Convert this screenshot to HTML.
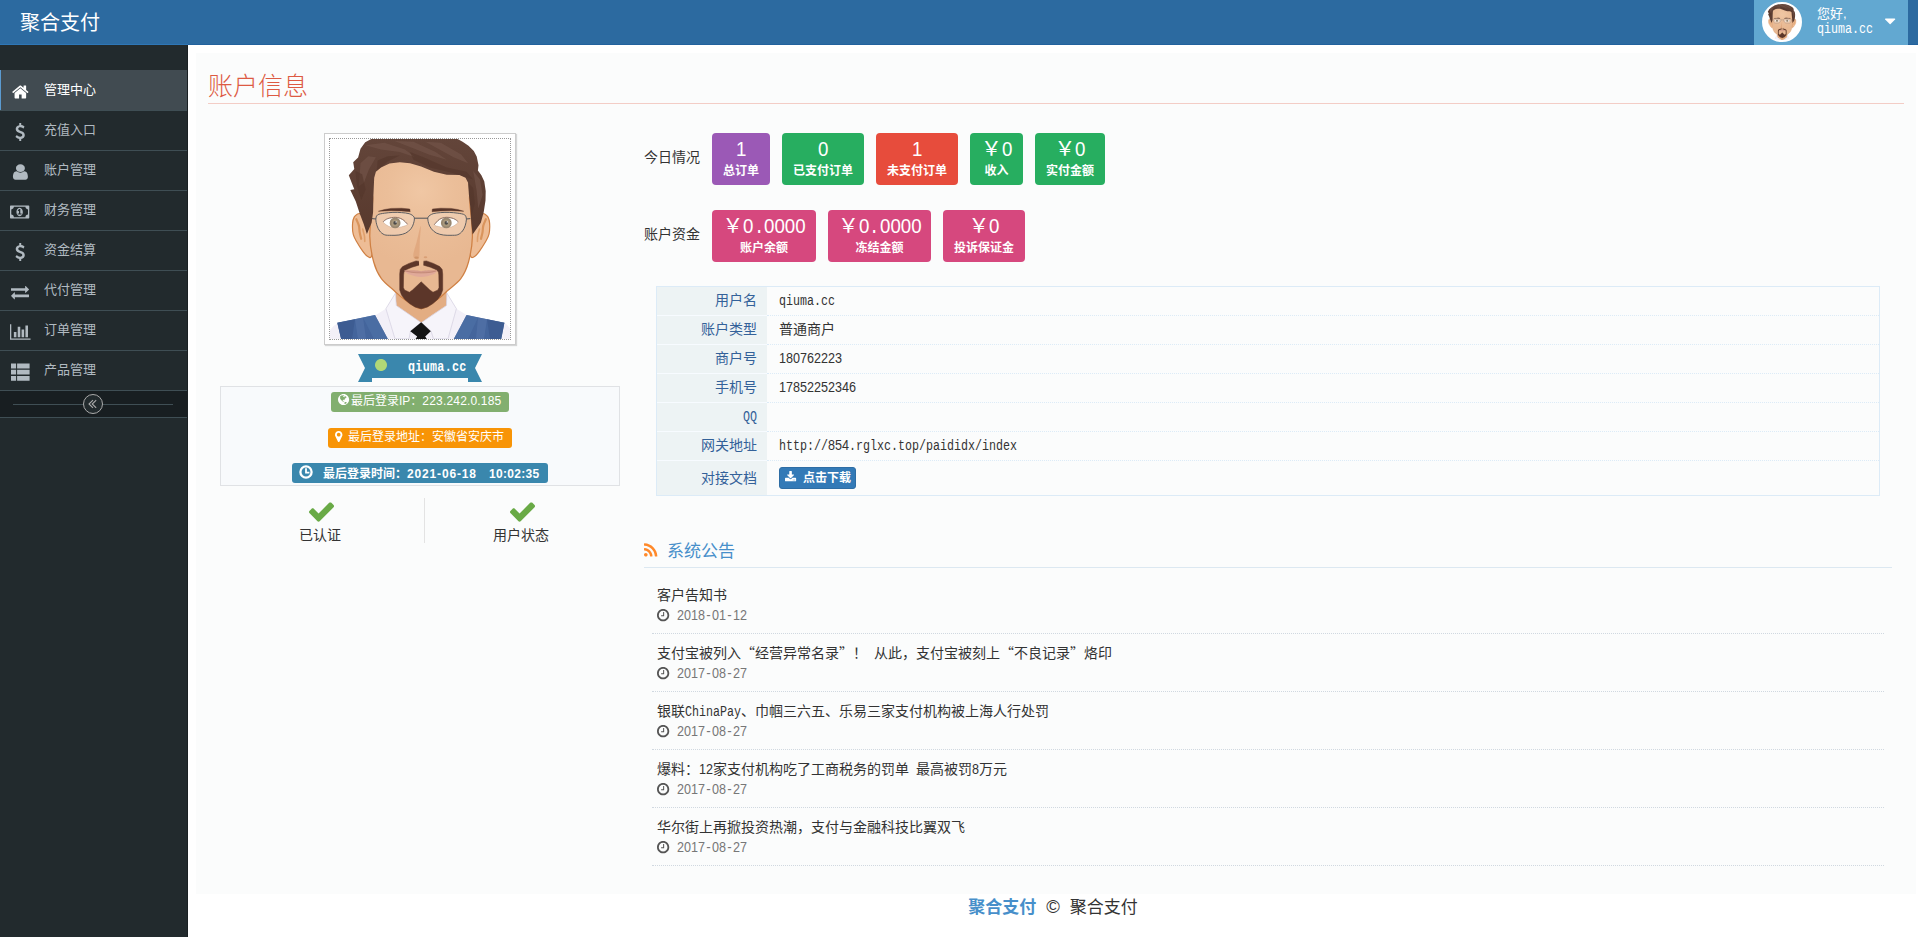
<!DOCTYPE html>
<html lang="zh-CN">
<head>
<meta charset="utf-8">
<title>聚合支付</title>
<style>
*{box-sizing:border-box}
html,body{margin:0;padding:0}
body{width:1918px;height:937px;overflow:hidden;background:#fff;position:relative;color:#333;
 font-family:"Liberation Sans","Noto Sans CJK SC",sans-serif;font-size:14px;line-height:20px}
svg.i{display:inline-block;vertical-align:top;overflow:visible}
.mm{font-family:"Liberation Mono",monospace;display:inline-block;transform:scaleX(.8333);transform-origin:0 50%;white-space:pre}
.md{font-family:"Liberation Sans",sans-serif;display:inline-block;transform:scaleX(.899);transform-origin:0 50%;white-space:pre}
.q{font-family:"Noto Sans CJK SC",sans-serif;line-height:0}
.abs{position:absolute}
/* navbar */
#navbar{position:absolute;left:0;top:0;width:1918px;height:45px;background:#2c6aa0}
#navbar:before{content:"";position:absolute;left:0;top:44px;width:188px;height:1px;background:#2e76b6}
#navbar:after{content:"";position:absolute;left:188px;top:44px;width:1730px;height:1px;background:#22629d}
#user{z-index:2}
#brand{position:absolute;left:20px;top:1px;height:45px;line-height:44px;font-size:20px;color:#fff;white-space:nowrap;text-shadow:none}
#user{position:absolute;left:1754px;top:0;width:154px;height:45px;background:#62a8d1;color:#fff}
#user .photo{position:absolute;left:8px;top:2px;width:40px;height:40px;border-radius:50%;border:2px solid #fff;background:#fff;overflow:hidden}
#user .hello{position:absolute;left:63px;top:5.5px;font-size:13px;line-height:16px;white-space:nowrap}
#user .uname{position:absolute;left:63px;top:19.5px;font-size:14px;line-height:16px;white-space:nowrap}
/* sidebar */
#sidebar{position:absolute;left:0;top:45px;width:188px;height:892px;background:#222a2d;border-right:1px solid #1a2023}
#sidebar ul{list-style:none;margin:0;padding:0;position:absolute;left:0;top:25px;width:187px}
#sidebar li{position:relative;height:40px;border-top:1px solid #3f4e54;color:#b1bac1;font-size:13px}
#sidebar li.active{background:#414b51;color:#fff;border-top-color:#414b51}
#sidebar li.active:before{content:"";position:absolute;left:0;top:-1px;width:1px;height:41px;background:#5b9bd1}
#sidebar li .t{position:absolute;left:44px;top:9px;line-height:20px;white-space:nowrap}
#sidebar li .ic{position:absolute;left:0;top:11.5px;width:40px;text-align:center;height:18px}
#toggle{position:absolute;left:0;top:345px;width:187px;height:28px;border-top:1px solid #3f4e54;border-bottom:1px solid #3f4e54;background:#181e21}
#toggle:before{content:"";position:absolute;left:13px;right:14px;top:13px;border-top:1px solid #3f4e54}
#toggle .c{position:absolute;left:83px;top:3px;width:20px;height:20px;border:1px solid #aaa;border-radius:50%;background:#222a2d}
/* main */
#page{position:absolute;left:196px;top:53px;width:1720px;height:841px;background:#fbfcfc}
h2.hd{position:absolute;left:12px;top:50px;width:1696px;height:1px;margin:0;border-bottom:1px solid #f3cdc6}
h2.hd span{position:absolute;left:0;top:-34px;font-size:25px;line-height:34px;font-weight:300;color:#dd5a43;white-space:nowrap}

/* left column (page coords: x-196, y-53) */
#pic{position:absolute;left:128px;top:80px;width:192px;height:212px;border:1px solid #ccc;background:#fff;padding:4px;box-shadow:1px 1px 1px rgba(0,0,0,.15)}
#pic .in{width:182px;height:202px;border:1px dotted #999;background:#fff;overflow:hidden}
#ribbon{position:absolute;left:162px;top:301px;width:124px;height:28px}
#ribbon .tx{position:absolute;left:50px;top:2px;font-size:14px;line-height:20px;font-weight:bold;color:#fff;white-space:nowrap;letter-spacing:.4px}
#contact{position:absolute;left:24px;top:333px;width:400px;height:100px;border:1px solid #e0e2e5;background:#f8fafc}
.lb{position:absolute;height:20px;border-radius:3px;color:#fff;font-size:12px;line-height:20px;white-space:nowrap;text-align:left}
.lb1{left:110px;top:5px;width:178px;background:#82af6f}
.lb2{left:107px;top:41px;width:184px;background:#f89406}
.lb3{left:71px;top:76px;width:256px;background:#3a87ad;font-weight:bold}
.lb .tx{position:absolute;top:0}
.g2{position:absolute;top:445px;width:200px;height:45px;text-align:center;font-size:14px}
.g2 .ck{position:absolute;left:0;width:200px;top:-5px;text-align:center}
.g2 .tx{position:absolute;left:0;width:200px;top:27px;line-height:20px;color:#333}
#vsep{position:absolute;left:228px;top:445px;width:1px;height:45px;background:#e3e3e3}
/* right column */
.rowlab{position:absolute;left:448px;font-size:14px;line-height:20px;color:#333;white-space:nowrap}
.sb{position:absolute;height:52px;border-radius:4px;color:#fff;text-align:center;white-space:nowrap}
.sb .n{position:absolute;left:0;right:0;top:4px;font-size:20.8px;line-height:24px}
.sb .l{position:absolute;left:0;right:0;top:28.7px;font-size:12px;line-height:18px;font-weight:bold}
.purple{background:#9b59b6}.green{background:#27ae60}.red{background:#e74c3c}.pink{background:#d6487e}
#info{position:absolute;left:460px;top:233px;width:1224px;border:1px solid #dcebf7;font-size:14px}
#info .r{display:flex;height:29px}
#info .r:last-child{height:35px}
#info .k{width:110px;flex:none;text-align:right;padding:4px 10px 0 4px;color:#336199;background:#edf3f4;border-top:1px solid #f7fbff;line-height:18px}
#info .v{flex:1;padding:4px 4px 0 12px;border-top:1px dotted #dcebf7;color:#333;line-height:18px;white-space:nowrap}
#info .r:first-child{height:28px}
#info .r:first-child .k,#info .r:first-child .v{border-top:0}
#dl{display:inline-block;position:relative;top:2px;height:22px;width:77px;border:1px solid #2e6da4;border-radius:3px;background:#337ab7;color:#fff;font-size:12px;font-weight:bold;line-height:20px}
#whd{position:absolute;left:448px;top:485px;width:1248px;height:30px;border-bottom:1px solid #dce8f1}
#whd .tt{position:absolute;left:23px;top:1px;font-size:17px;line-height:26px;color:#478fca;white-space:nowrap}
#feed{position:absolute;left:456px;top:523px;width:1232px}
.act{height:58px;border-bottom:1px dotted #d0d8e0;position:relative}
.act .ti{position:absolute;left:5px;top:9px;line-height:20px;font-size:14px;color:#333;white-space:nowrap}
.act .tm{position:absolute;left:5px;top:29px;line-height:20px;font-size:14px;color:#777;white-space:nowrap}
.act .tm .d{position:absolute;left:20px;top:0}
#footer{position:absolute;left:188px;top:896px;width:1730px;text-align:center;font-size:17px;line-height:24px;color:#333}
#footer b{color:#478fca}
#footer .cp{display:inline-block;width:33.6px;text-align:center;font-size:18.5px;line-height:20px}

</style>
</head>
<body>
<div id="navbar">
  <div id="brand">聚合支付</div>
  <div id="user">
    <div class="photo"><svg id="av2" viewBox="0 0 180 200" width="36" height="40" style="display:block"><defs><radialGradient id="avsk2" cx="91" cy="52" r="75" gradientUnits="userSpaceOnUse"><stop offset="0" stop-color="#f0c7a4"/><stop offset=".45" stop-color="#ebbe99"/><stop offset="1" stop-color="#e8b892"/></radialGradient><linearGradient id="avhr2" x1="0" y1="0" x2="0" y2="1"><stop offset="0" stop-color="#63453a"/><stop offset="1" stop-color="#58392d"/></linearGradient></defs><rect width="36" height="40" fill="#fff"/><path d="M-1 200 L-1 193 Q2 187 7.3 184.5 L45 176.5 L55.9 169.7 L65.5 154 L91 170 L116.8 154 L126.4 169.7 L136.6 176.1 L174.4 183.8 Q180 187 181 193 L181 200 Z" fill="#f3f0f8"/><path d="M65.5 140 L65.5 158 L66.5 166.5 L80 176 L91.2 184 L102 176 L116.5 166.5 L116.8 158 L116.8 140 Z" fill="#e3ad83"/><path d="M66 166 L91.2 184 L116.6 166 L110 178 L91.2 186 L72 178Z" fill="#edbf99"/><path d="M65.5 154 L55.9 169.7 L65 199.8 L79 199.8 L80.5 192 L91 183.5 L66.3 166.5 Z" fill="#f6f4fa" stroke="#cfc9dc" stroke-width=".6"/><path d="M116.8 154 L126.4 169.7 L118 199.8 L103.5 199.8 L101 192 L91.4 183.5 L116.5 166.5 Z" fill="#f6f4fa" stroke="#cfc9dc" stroke-width=".6"/><path d="M7.3 183.8 L45 176.1 L57.9 200 L11.1 200 Z" fill="#44659c"/><path d="M7.3 183.8 L25 180.2 L22 200 L11.1 200Z" fill="#3d5c92"/><path d="M33 178.5 L45 176.1 L57.9 200 L44 200Z" fill="#4d70a6" opacity=".7"/><path d="M25 180.2 L33 178.5 L36 200 L28 200Z" fill="#5272a8" opacity=".7"/><path d="M136.6 176.1 L174.4 183.8 L171.2 200 L123.8 200 Z" fill="#44659c"/><path d="M157 180.2 L174.4 183.8 L171.2 200 L160 200Z" fill="#3d5c92"/><path d="M136.6 176.1 L148 178.5 L138 200 L123.8 200Z" fill="#4d70a6" opacity=".7"/><path d="M148 178.5 L157 180.2 L154 200 L146 200Z" fill="#5272a8" opacity=".7"/><path d="M91.2 183.2 L100.8 192.2 L95.2 197.6 L96.8 200 L85.6 200 L87.2 197.6 L80.3 192.2 Z" fill="#141414"/><path d="M30.1 74.6 C27.6 74.5 28.2 74.6 27.2 75.2 C26.2 75.8 25.0 76.6 24.2 78.1 C23.4 79.6 22.8 81.2 22.6 84.1 C22.4 86.9 22.5 92.1 23.2 95.2 C23.9 98.3 25.1 100.0 26.7 102.8 C28.3 105.6 31.0 109.8 32.7 112.2 C34.4 114.6 35.5 116.0 37.0 116.9 C38.5 117.8 40.4 119.8 41.4 117.6 C42.4 115.4 42.9 110.9 43.0 104.0 C43.1 97.1 44.1 80.9 42.0 76.0 C39.9 71.1 32.6 74.7 30.1 74.6 Z" fill="#eebd96" stroke="#cf8044" stroke-width="1.2"/><path d="M152.1 74.6 C154.6 74.5 154.0 74.6 155.0 75.2 C156.0 75.8 157.2 76.6 158.0 78.1 C158.8 79.6 159.4 81.2 159.6 84.1 C159.8 86.9 159.7 92.1 159.0 95.2 C158.3 98.3 157.1 100.0 155.5 102.8 C153.9 105.6 151.2 109.8 149.5 112.2 C147.8 114.6 146.6 116.0 145.2 116.9 C143.8 117.8 141.8 119.8 140.8 117.6 C139.8 115.4 139.3 110.9 139.2 104.0 C139.1 97.1 138.0 80.9 140.2 76.0 C142.3 71.1 149.6 74.7 152.1 74.6 Z" fill="#eebd96" stroke="#cf8044" stroke-width="1.2"/><path d="M26.3 80.2 C26.7 81.3 28.3 84.4 28.9 86.6 C29.5 88.8 29.3 91.2 29.7 93.4 C30.1 95.6 30.9 98.7 31.2 99.8" fill="none" stroke="#d9945c" stroke-width="2.2" stroke-linecap="round"/><path d="M32.7 90.0 C33.0 91.2 34.0 94.8 34.4 96.9 C34.8 99.0 34.7 101.5 34.8 102.4" fill="none" stroke="#dfa06c" stroke-width="1.6" stroke-linecap="round"/><path d="M155.9 80.2 C155.5 81.3 153.9 84.4 153.3 86.6 C152.7 88.8 152.9 91.2 152.5 93.4 C152.1 95.6 151.2 98.7 151.0 99.8" fill="none" stroke="#d9945c" stroke-width="2.2" stroke-linecap="round"/><path d="M149.5 90.0 C149.2 91.2 148.1 94.8 147.8 96.9 C147.4 99.0 147.5 101.5 147.4 102.4" fill="none" stroke="#dfa06c" stroke-width="1.6" stroke-linecap="round"/><path d="M43.0 22.0 C58.7 15.7 120.9 15.7 137.0 22.0 C153.1 28.3 138.6 47.4 139.5 60.0 C140.4 72.6 142.6 86.9 142.4 97.4 C142.2 107.9 140.4 116.0 138.5 123.0 C136.6 130.1 134.2 135.0 130.8 139.7 C127.4 144.4 121.8 147.8 118.0 151.2 C114.2 154.6 112.5 156.9 108.0 160.0 C103.5 163.1 96.9 169.5 91.2 169.5 C85.5 169.5 78.5 163.0 74.0 160.0 C69.5 157.0 67.8 154.9 64.0 151.5 C60.2 148.1 54.8 144.4 51.4 139.7 C48.0 134.9 45.6 130.1 43.7 123.0 C41.8 116.0 40.0 107.9 39.8 97.4 C39.6 86.9 42.2 72.6 42.7 60.0 C43.2 47.4 27.3 28.3 43.0 22.0 Z" fill="url(#avsk2)" stroke="#cf8044" stroke-width="1.25"/><path d="M90.7 86.9 C90.2 86.9 88.1 97.4 86.8 102.2 C85.6 107.1 83.5 113.0 83.3 115.9 C83.0 118.8 84.2 119.0 85.1 119.5 C86.1 120.0 88.2 121.8 89.0 118.9 C89.8 116.0 89.5 107.6 89.8 102.2 C90.1 96.9 91.2 86.9 90.7 86.9 Z" fill="#dfa67c" opacity=".85"/><ellipse cx="86.5" cy="118.6" rx="2.2" ry="1.2" fill="#cf9468"/><ellipse cx="95.5" cy="118.3" rx="1.8" ry="1" fill="#d9a077"/><path d="M48.4 72.3 L54.4 70.5 L61.2 69.4 L71.5 69.2 L79.8 70.0 L80.2 72.7 L71.5 72.0 L61.2 71.7 L54.4 72.0 Z" fill="#593529" stroke="#593529" stroke-width=".4" stroke-linejoin="round"/><path d="M133.8 72.3 L127.8 70.5 L121.0 69.4 L110.7 69.2 L102.4 70.0 L102.0 72.7 L110.7 72.0 L121.0 71.7 L127.8 72.0 Z" fill="#593529" stroke="#593529" stroke-width=".4" stroke-linejoin="round"/><path d="M53.1 82.8 C53.0 81.5 55.7 80.3 57.8 79.6 C59.9 78.9 63.1 78.3 65.5 78.5 C67.9 78.6 70.3 79.3 72.3 80.5 C74.3 81.6 77.6 84.1 77.4 85.3 C77.3 86.6 73.5 87.3 71.5 87.9 C69.5 88.5 67.6 88.8 65.5 88.7 C63.4 88.6 60.7 88.3 58.7 87.3 C56.6 86.3 53.3 84.0 53.1 82.8 Z" fill="#fff" stroke="#b98a6a" stroke-width=".5"/><path d="M128.2 82.8 C128.3 81.5 125.5 80.3 123.6 79.6 C121.6 78.9 118.6 78.3 116.3 78.5 C113.9 78.6 111.5 79.2 109.5 80.5 C107.5 81.7 104.2 84.6 104.3 85.8 C104.5 87.1 108.3 87.4 110.3 87.9 C112.3 88.4 114.2 88.8 116.3 88.7 C118.4 88.6 121.1 88.3 123.1 87.3 C125.1 86.3 128.2 84.0 128.2 82.8 Z" fill="#fff" stroke="#b98a6a" stroke-width=".5"/><circle cx="65.1" cy="83.9" r="5.4" fill="#7d6749"/><circle cx="65.1" cy="83.9" r="3.5" fill="#937d59"/><circle cx="65.1" cy="83.9" r="1.8" fill="#1c1a18"/><circle cx="66.1" cy="82.9" r=".7" fill="#fff"/><circle cx="116.3" cy="83.9" r="5.4" fill="#7d6749"/><circle cx="116.3" cy="83.9" r="3.5" fill="#937d59"/><circle cx="116.3" cy="83.9" r="1.8" fill="#1c1a18"/><circle cx="117.3" cy="82.9" r=".7" fill="#fff"/><path d="M53.1 82.8 C53.9 82.2 55.7 80.3 57.8 79.6 C59.9 78.9 63.1 78.2 65.5 78.3 C67.9 78.4 70.3 79.1 72.3 80.3 C74.3 81.4 76.6 84.3 77.4 85.2" fill="none" stroke="#6b4534" stroke-width=".9"/><path d="M128.2 82.8 C127.5 82.2 125.5 80.3 123.6 79.6 C121.6 78.9 118.6 78.2 116.3 78.3 C113.9 78.4 111.5 79.1 109.5 80.3 C107.5 81.5 105.2 84.8 104.3 85.7" fill="none" stroke="#6b4534" stroke-width=".9"/><path d="M47.6 75.9 C49.0 74.9 51.8 74.6 54.4 74.2 C57.0 73.8 60.1 73.5 62.9 73.4 C65.8 73.3 68.8 73.4 71.5 73.6 C74.2 73.9 77.1 74.0 79.2 74.7 C81.3 75.5 83.4 76.6 84.1 78.2 C84.8 79.7 84.1 82.3 83.6 84.3 C83.1 86.2 82.2 88.2 80.9 89.8 C79.6 91.5 77.7 93.1 75.7 94.1 C73.7 95.1 71.3 95.6 68.9 96.0 C66.5 96.4 63.6 96.3 61.2 96.3 C58.8 96.2 56.3 96.5 54.4 95.7 C52.5 95.0 50.9 93.5 49.7 92.0 C48.5 90.5 47.8 88.8 47.1 86.9 C46.5 84.9 45.8 82.3 45.9 80.5 C45.9 78.6 46.1 77.0 47.6 75.9 Z" fill="#fff" fill-opacity=".22" stroke="#4e5259" stroke-width=".9"/><path d="M134.7 75.9 C133.2 74.9 130.4 74.6 127.8 74.2 C125.3 73.8 122.1 73.5 119.3 73.4 C116.4 73.3 113.5 73.4 110.7 73.6 C108.0 73.9 105.2 74.0 103.1 74.7 C101.0 75.5 98.9 76.6 98.1 78.2 C97.4 79.7 98.1 82.3 98.6 84.3 C99.2 86.2 100.0 88.2 101.4 89.8 C102.7 91.5 104.5 93.1 106.5 94.1 C108.5 95.1 110.9 95.6 113.3 96.0 C115.7 96.4 118.6 96.3 121.0 96.3 C123.4 96.2 125.9 96.5 127.8 95.7 C129.7 95.0 131.3 93.5 132.5 92.0 C133.7 90.5 134.4 88.8 135.1 86.9 C135.7 84.9 136.4 82.3 136.4 80.5 C136.3 78.6 136.1 77.0 134.7 75.9 Z" fill="#fff" fill-opacity=".22" stroke="#4e5259" stroke-width=".9"/><path d="M84.2 79.2 L98 79.2 M41.8 79.6 L46 80 M136.2 80 L140.4 79.6" stroke="#4e5259" stroke-width="1" fill="none"/><path d="M88.4 122.2 L86.0 121.9 L79.0 124.4 L72.6 127.6 L70.2 130.5 L69.7 135.0 L69.7 151.0 L71.5 156.0 L74.8 160.4 L79.5 164.6 L85.0 168.0 L91.2 169.8 L97.4 168.0 L102.9 164.6 L107.6 160.4 L110.9 156.0 L112.7 151.0 L112.7 135.0 L112.2 130.5 L109.8 127.6 L103.4 124.4 L96.4 121.9 L94.0 122.2 Z M88.8 126.2 L82.0 128.2 L76.0 130.8 L74.0 133.0 L73.6 136.0 L73.4 148.5 L74.5 151.0 L79.4 153.2 L82.5 151.0 L91.2 142.8 L99.9 151.0 L103.0 153.2 L107.9 151.0 L109.0 148.5 L108.8 136.0 L108.4 133.0 L106.4 130.8 L100.4 128.2 L93.6 126.2 Z" fill="#5c3629" fill-rule="evenodd" stroke="#5c3629" stroke-width=".5" stroke-linejoin="round"/><path d="M88.9 121 L93.5 121 L93.3 127.5 L89.1 127.5Z" fill="#ecbd96"/><path d="M74.5 131.7 C74.9 131.2 79.4 132.6 82.2 132.7 C85.0 132.9 88.2 132.5 91.2 132.5 C94.1 132.5 97.5 132.9 100.1 132.7 C102.7 132.6 106.3 131.2 106.8 131.7 C107.2 132.2 105.3 134.5 102.7 135.6 C100.1 136.6 95.0 138.1 91.2 138.1 C87.3 138.1 82.4 136.6 79.6 135.6 C76.9 134.5 74.1 132.2 74.5 131.7 Z" fill="#e0a999"/><path d="M74.5 131.7 C74.5 131.3 79.8 131.2 82.2 131.2 C84.5 131.2 87.1 131.5 88.6 131.7 C90.1 131.9 90.3 132.2 91.2 132.2 C92.0 132.2 92.2 131.9 93.7 131.7 C95.2 131.5 97.9 131.2 100.1 131.2 C102.3 131.2 106.8 131.3 106.8 131.7 C106.8 132.1 102.7 133.1 100.1 133.5 C97.5 133.9 94.1 134.0 91.2 134.0 C88.2 134.0 85.0 133.9 82.2 133.5 C79.4 133.1 74.5 132.1 74.5 131.7 Z" fill="#d39a8a"/><path d="M74.8 131.8 C76.0 132.1 79.5 133.0 82.2 133.4 C84.9 133.7 88.2 133.9 91.2 133.9 C94.1 133.9 97.6 133.7 100.1 133.4 C102.7 133.0 105.5 132.1 106.5 131.8" fill="none" stroke="#bd8270" stroke-width=".7"/><clipPath id="avhc2"><path d="M36.9 94.9 L33.7 84.9 L29.9 74.9 L25.8 62.6 L20.3 51.1 L24.3 50.3 L21.7 43.8 L18.8 36.2 L24.3 30.0 L23.2 23.3 L28.1 18.6 L30.5 9.8 L35.2 3.3 L41.6 -0.2 L83.9 -0.5 L127.3 -0.2 L132.6 2.7 L138.5 6.8 L143.8 12.1 L146.7 17.4 L148.5 26.2 L147.9 31.5 L151.4 36.2 L154.3 42.6 L155.7 52.0 L155.5 61.4 L153.7 73.2 L150.8 83.7 L142.6 95.5 L141.4 84.9 L140.2 67.3 L138.9 55.8 L138.1 43.8 L135.5 38.7 L129.5 36.1 L116.7 35.7 L103.9 32.7 L91.1 27.6 L80.0 24.2 L69.8 23.2 L59.5 24.6 L51.0 28.4 L45.9 32.7 L44.2 38.7 L43.4 56.7 L43.1 73.2 L41.6 83.7 Z"/></clipPath><path d="M36.9 94.9 L33.7 84.9 L29.9 74.9 L25.8 62.6 L20.3 51.1 L24.3 50.3 L21.7 43.8 L18.8 36.2 L24.3 30.0 L23.2 23.3 L28.1 18.6 L30.5 9.8 L35.2 3.3 L41.6 -0.2 L83.9 -0.5 L127.3 -0.2 L132.6 2.7 L138.5 6.8 L143.8 12.1 L146.7 17.4 L148.5 26.2 L147.9 31.5 L151.4 36.2 L154.3 42.6 L155.7 52.0 L155.5 61.4 L153.7 73.2 L150.8 83.7 L142.6 95.5 L141.4 84.9 L140.2 67.3 L138.9 55.8 L138.1 43.8 L135.5 38.7 L129.5 36.1 L116.7 35.7 L103.9 32.7 L91.1 27.6 L80.0 24.2 L69.8 23.2 L59.5 24.6 L51.0 28.4 L45.9 32.7 L44.2 38.7 L43.4 56.7 L43.1 73.2 L41.6 83.7 Z" fill="url(#avhr2)"/><g clip-path="url(#avhc2)"><path d="M35.6 6.2 L54.4 3.7 L74.9 10.5 L85.1 18.2 L69.8 13.1 L51.0 10.5 Z" fill="#76584c" opacity=".55"/><path d="M64.6 2.0 L83.4 2.8 L105.6 13.1 L116.7 20.8 L98.8 15.6 L80.0 8.0 Z" fill="#76584c" opacity=".55"/><path d="M95.4 2.8 L110.7 3.7 L131.2 15.6 L138.1 24.2 L123.6 18.2 L108.2 9.7 Z" fill="#76584c" opacity=".55"/><path d="M30.5 24.2 L38.2 17.3 L45.9 18.2 L39.0 30.2 L33.9 43.8 L28.8 47.2 Z" fill="#76584c" opacity=".55"/><path d="M143.2 31.9 L150.0 40.4 L152.6 55.8 L148.3 69.4 L146.6 51.5 Z" fill="#76584c" opacity=".55"/><path d="M80.0 13.1 L95.4 19.1 L116.7 28.4 L136.4 32.7 L143.2 40.4 L121.0 33.6 L99.6 28.4 L83.4 20.8 Z" fill="#52342a" opacity=".55"/><path d="M47.6 21.6 L57.8 17.3 L69.8 16.5 L57.8 22.5 L46.7 31.9 Z" fill="#52342a" opacity=".55"/><path d="M25.4 31.9 L32.2 35.3 L35.6 50.6 L31.3 60.9 L27.1 47.2 Z" fill="#52342a" opacity=".55"/><path d="M138.1 43.8 L143.2 48.9 L144.9 64.3 L141.5 77.1 L139.8 60.0 Z" fill="#52342a" opacity=".55"/></g></svg></div>
    <div class="hello">您好,</div>
    <div class="uname"><span class="mm" style="margin-right:-11.21px">qiuma.cc</span></div>
    <div class="abs" style="left:131px;top:12px"><svg class="i " viewBox="0 0 1024 1792" width="10.29" height="18.00" style="fill:#fff;"><path d="M1024 704C1024 669 995 640 960 640H64C29 640 0 669 0 704C0 721 7 737 19 749L467 1197C479 1209 495 1216 512 1216C529 1216 545 1209 557 1197L1005 749C1017 737 1024 721 1024 704Z"/></svg></div>
  </div>
</div>
<div id="sidebar">
  <ul>
    <li class="active"><span class="ic"><svg class="i " viewBox="0 0 1664 1792" width="16.71" height="18.00" style="fill:#fff;"><path d="M1408 992C1408 990 1408 988 1407 986L832 512L257 986C257 988 256 990 256 992V1472C256 1507 285 1536 320 1536H704V1152H960V1536H1344C1379 1536 1408 1507 1408 1472ZM1631 923C1642 910 1640 889 1627 878L1408 696V288C1408 270 1394 256 1376 256H1184C1166 256 1152 270 1152 288V483L908 279C866 244 798 244 756 279L37 878C24 889 22 910 33 923L95 997C100 1003 108 1007 116 1008C125 1009 133 1006 140 1001L832 424L1524 1001C1530 1006 1537 1008 1545 1008C1546 1008 1547 1008 1548 1008C1556 1007 1564 1003 1569 997L1631 923Z"/></svg></span><span class="t">管理中心</span></li>
    <li><span class="ic"><svg class="i " viewBox="0 0 1024 1792" width="10.29" height="18.00" style="fill:#b1bac1;"><path d="M978 1185C978 944 770 863 586 792C444 737 322 690 322 584C322 493 410 430 537 430C687 430 808 537 809 538C817 544 826 547 836 545C846 544 854 538 859 529L940 383C947 371 945 356 935 345C931 341 823 231 620 208V32C620 14 606 0 588 0H453C436 0 421 14 421 32V212C212 252 68 404 68 588C68 839 292 929 472 1000C607 1054 725 1101 725 1197C725 1310 619 1362 521 1362C344 1362 204 1228 202 1227C196 1220 187 1217 178 1218C169 1219 160 1223 155 1230L52 1365C43 1377 44 1394 54 1406C59 1412 187 1552 421 1585V1760C421 1778 436 1792 453 1792H588C606 1792 620 1778 620 1760V1585C832 1550 978 1389 978 1185Z"/></svg></span><span class="t">充值入口</span></li>
    <li><span class="ic"><svg class="i " viewBox="0 0 1280 1792" width="12.86" height="18.00" style="fill:#b1bac1;transform:scaleX(1.16)"><path d="M1280 1399C1280 1136 1215 832 953 832C872 911 762 960 640 960C518 960 408 911 327 832C65 832 0 1136 0 1399C0 1545 96 1664 213 1664H1067C1184 1664 1280 1545 1280 1399ZM1024 512C1024 300 852 128 640 128C428 128 256 300 256 512C256 724 428 896 640 896C852 896 1024 724 1024 512Z"/></svg></span><span class="t">账户管理</span></li>
    <li><span class="ic"><svg class="i " viewBox="0 0 1920 1792" width="19.29" height="18.00" style="fill:#b1bac1;"><path d="M768 1152V1056H896V768H894C878 793 863 804 839 825L762 745L910 608H1024V1056H1152V1152ZM1280 896C1280 714 1170 480 960 480C750 480 640 714 640 896C640 1078 750 1312 960 1312C1170 1312 1280 1078 1280 896ZM1792 1152C1651 1152 1536 1267 1536 1408H384C384 1267 269 1152 128 1152V640C269 640 384 525 384 384H1536C1536 525 1651 640 1792 640V1152ZM1920 320C1920 285 1891 256 1856 256H64C29 256 0 285 0 320V1472C0 1507 29 1536 64 1536H1856C1891 1536 1920 1507 1920 1472Z"/></svg></span><span class="t">财务管理</span></li>
    <li><span class="ic"><svg class="i " viewBox="0 0 1024 1792" width="10.29" height="18.00" style="fill:#b1bac1;"><path d="M978 1185C978 944 770 863 586 792C444 737 322 690 322 584C322 493 410 430 537 430C687 430 808 537 809 538C817 544 826 547 836 545C846 544 854 538 859 529L940 383C947 371 945 356 935 345C931 341 823 231 620 208V32C620 14 606 0 588 0H453C436 0 421 14 421 32V212C212 252 68 404 68 588C68 839 292 929 472 1000C607 1054 725 1101 725 1197C725 1310 619 1362 521 1362C344 1362 204 1228 202 1227C196 1220 187 1217 178 1218C169 1219 160 1223 155 1230L52 1365C43 1377 44 1394 54 1406C59 1412 187 1552 421 1585V1760C421 1778 436 1792 453 1792H588C606 1792 620 1778 620 1760V1585C832 1550 978 1389 978 1185Z"/></svg></span><span class="t">资金结算</span></li>
    <li><span class="ic"><svg class="i " viewBox="0 0 1792 1792" width="18.00" height="18.00" style="fill:#b1bac1;"><path d="M1792 1184C1792 1166 1777 1152 1760 1152H384V960C384 942 369 928 352 928C344 928 335 931 329 937L9 1257C3 1263 0 1271 0 1280C0 1288 3 1296 9 1302L328 1622C335 1628 343 1632 352 1632C370 1632 384 1617 384 1600V1408H1760C1777 1408 1792 1393 1792 1376ZM1792 640C1792 632 1789 623 1783 617L1464 298C1457 292 1449 288 1440 288C1422 288 1408 302 1408 320V512H32C15 512 0 527 0 544V736C0 753 15 768 32 768H1408V960C1408 977 1423 992 1440 992C1448 992 1457 989 1463 983L1783 663C1789 657 1792 648 1792 640Z"/></svg></span><span class="t">代付管理</span></li>
    <li><span class="ic"><svg class="i " viewBox="0 0 2048 1792" width="20.57" height="18.00" style="fill:#b1bac1;"><path d="M640 896H384V1408H640ZM1024 384H768V1408H1024ZM2048 1536H128V128H0V1664H2048ZM1408 640H1152V1408H1408ZM1792 256H1536V1408H1792Z"/></svg></span><span class="t">订单管理</span></li>
    <li><span class="ic"><svg class="i" width="18.6" height="18" viewBox="0 0 18.6 18" style="fill:#b1bac1"><path d="M0 .6h5.1v4.8H0zM6.1 .6h12.5v4.8H6.1zM0 6.8h5.1v4.8H0zM6.1 6.8h12.5v4.8H6.1zM0 13h5.1v4.8H0zM6.1 13h12.5v4.8H6.1z"/></svg></span><span class="t">产品管理</span></li>
  </ul>
  <div id="toggle"><div class="c"><span class="abs" style="left:3.5px;top:1px"><svg class="i " viewBox="0 0 1024 1792" width="8.57" height="15.00" style="fill:#aaa;"><path d="M627 1376C627 1368 623 1359 617 1353L224 960L617 567C623 561 627 552 627 544C627 536 623 527 617 521L567 471C561 465 552 461 544 461C536 461 527 465 521 471L55 937C49 943 45 952 45 960C45 968 49 977 55 983L521 1449C527 1455 536 1459 544 1459C552 1459 561 1455 567 1449L617 1399C623 1393 627 1384 627 1376ZM1011 1376C1011 1368 1007 1359 1001 1353L608 960L1001 567C1007 561 1011 552 1011 544C1011 536 1007 527 1001 521L951 471C945 465 936 461 928 461C920 461 911 465 905 471L439 937C433 943 429 952 429 960C429 968 433 977 439 983L905 1449C911 1455 920 1459 928 1459C936 1459 945 1455 951 1449L1001 1399C1007 1393 1011 1384 1011 1376Z"/></svg></span></div></div>
</div>
<div id="page">
  <h2 class="hd"><span>账户信息</span></h2>
  <div id="pic"><div class="in"><svg id="av" viewBox="0 0 180 200" width="180" height="200" style="display:block"><defs><radialGradient id="avsk" cx="91" cy="52" r="75" gradientUnits="userSpaceOnUse"><stop offset="0" stop-color="#f0c7a4"/><stop offset=".45" stop-color="#ebbe99"/><stop offset="1" stop-color="#e8b892"/></radialGradient><linearGradient id="avhr" x1="0" y1="0" x2="0" y2="1"><stop offset="0" stop-color="#63453a"/><stop offset="1" stop-color="#58392d"/></linearGradient></defs><rect width="180" height="200" fill="#fff"/><path d="M-1 200 L-1 193 Q2 187 7.3 184.5 L45 176.5 L55.9 169.7 L65.5 154 L91 170 L116.8 154 L126.4 169.7 L136.6 176.1 L174.4 183.8 Q180 187 181 193 L181 200 Z" fill="#f3f0f8"/><path d="M65.5 140 L65.5 158 L66.5 166.5 L80 176 L91.2 184 L102 176 L116.5 166.5 L116.8 158 L116.8 140 Z" fill="#e3ad83"/><path d="M66 166 L91.2 184 L116.6 166 L110 178 L91.2 186 L72 178Z" fill="#edbf99"/><path d="M65.5 154 L55.9 169.7 L65 199.8 L79 199.8 L80.5 192 L91 183.5 L66.3 166.5 Z" fill="#f6f4fa" stroke="#cfc9dc" stroke-width=".6"/><path d="M116.8 154 L126.4 169.7 L118 199.8 L103.5 199.8 L101 192 L91.4 183.5 L116.5 166.5 Z" fill="#f6f4fa" stroke="#cfc9dc" stroke-width=".6"/><path d="M7.3 183.8 L45 176.1 L57.9 200 L11.1 200 Z" fill="#44659c"/><path d="M7.3 183.8 L25 180.2 L22 200 L11.1 200Z" fill="#3d5c92"/><path d="M33 178.5 L45 176.1 L57.9 200 L44 200Z" fill="#4d70a6" opacity=".7"/><path d="M25 180.2 L33 178.5 L36 200 L28 200Z" fill="#5272a8" opacity=".7"/><path d="M136.6 176.1 L174.4 183.8 L171.2 200 L123.8 200 Z" fill="#44659c"/><path d="M157 180.2 L174.4 183.8 L171.2 200 L160 200Z" fill="#3d5c92"/><path d="M136.6 176.1 L148 178.5 L138 200 L123.8 200Z" fill="#4d70a6" opacity=".7"/><path d="M148 178.5 L157 180.2 L154 200 L146 200Z" fill="#5272a8" opacity=".7"/><path d="M91.2 183.2 L100.8 192.2 L95.2 197.6 L96.8 200 L85.6 200 L87.2 197.6 L80.3 192.2 Z" fill="#141414"/><path d="M30.1 74.6 C27.6 74.5 28.2 74.6 27.2 75.2 C26.2 75.8 25.0 76.6 24.2 78.1 C23.4 79.6 22.8 81.2 22.6 84.1 C22.4 86.9 22.5 92.1 23.2 95.2 C23.9 98.3 25.1 100.0 26.7 102.8 C28.3 105.6 31.0 109.8 32.7 112.2 C34.4 114.6 35.5 116.0 37.0 116.9 C38.5 117.8 40.4 119.8 41.4 117.6 C42.4 115.4 42.9 110.9 43.0 104.0 C43.1 97.1 44.1 80.9 42.0 76.0 C39.9 71.1 32.6 74.7 30.1 74.6 Z" fill="#eebd96" stroke="#cf8044" stroke-width="1.2"/><path d="M152.1 74.6 C154.6 74.5 154.0 74.6 155.0 75.2 C156.0 75.8 157.2 76.6 158.0 78.1 C158.8 79.6 159.4 81.2 159.6 84.1 C159.8 86.9 159.7 92.1 159.0 95.2 C158.3 98.3 157.1 100.0 155.5 102.8 C153.9 105.6 151.2 109.8 149.5 112.2 C147.8 114.6 146.6 116.0 145.2 116.9 C143.8 117.8 141.8 119.8 140.8 117.6 C139.8 115.4 139.3 110.9 139.2 104.0 C139.1 97.1 138.0 80.9 140.2 76.0 C142.3 71.1 149.6 74.7 152.1 74.6 Z" fill="#eebd96" stroke="#cf8044" stroke-width="1.2"/><path d="M26.3 80.2 C26.7 81.3 28.3 84.4 28.9 86.6 C29.5 88.8 29.3 91.2 29.7 93.4 C30.1 95.6 30.9 98.7 31.2 99.8" fill="none" stroke="#d9945c" stroke-width="2.2" stroke-linecap="round"/><path d="M32.7 90.0 C33.0 91.2 34.0 94.8 34.4 96.9 C34.8 99.0 34.7 101.5 34.8 102.4" fill="none" stroke="#dfa06c" stroke-width="1.6" stroke-linecap="round"/><path d="M155.9 80.2 C155.5 81.3 153.9 84.4 153.3 86.6 C152.7 88.8 152.9 91.2 152.5 93.4 C152.1 95.6 151.2 98.7 151.0 99.8" fill="none" stroke="#d9945c" stroke-width="2.2" stroke-linecap="round"/><path d="M149.5 90.0 C149.2 91.2 148.1 94.8 147.8 96.9 C147.4 99.0 147.5 101.5 147.4 102.4" fill="none" stroke="#dfa06c" stroke-width="1.6" stroke-linecap="round"/><path d="M43.0 22.0 C58.7 15.7 120.9 15.7 137.0 22.0 C153.1 28.3 138.6 47.4 139.5 60.0 C140.4 72.6 142.6 86.9 142.4 97.4 C142.2 107.9 140.4 116.0 138.5 123.0 C136.6 130.1 134.2 135.0 130.8 139.7 C127.4 144.4 121.8 147.8 118.0 151.2 C114.2 154.6 112.5 156.9 108.0 160.0 C103.5 163.1 96.9 169.5 91.2 169.5 C85.5 169.5 78.5 163.0 74.0 160.0 C69.5 157.0 67.8 154.9 64.0 151.5 C60.2 148.1 54.8 144.4 51.4 139.7 C48.0 134.9 45.6 130.1 43.7 123.0 C41.8 116.0 40.0 107.9 39.8 97.4 C39.6 86.9 42.2 72.6 42.7 60.0 C43.2 47.4 27.3 28.3 43.0 22.0 Z" fill="url(#avsk)" stroke="#cf8044" stroke-width="1.25"/><path d="M90.7 86.9 C90.2 86.9 88.1 97.4 86.8 102.2 C85.6 107.1 83.5 113.0 83.3 115.9 C83.0 118.8 84.2 119.0 85.1 119.5 C86.1 120.0 88.2 121.8 89.0 118.9 C89.8 116.0 89.5 107.6 89.8 102.2 C90.1 96.9 91.2 86.9 90.7 86.9 Z" fill="#dfa67c" opacity=".85"/><ellipse cx="86.5" cy="118.6" rx="2.2" ry="1.2" fill="#cf9468"/><ellipse cx="95.5" cy="118.3" rx="1.8" ry="1" fill="#d9a077"/><path d="M48.4 72.3 L54.4 70.5 L61.2 69.4 L71.5 69.2 L79.8 70.0 L80.2 72.7 L71.5 72.0 L61.2 71.7 L54.4 72.0 Z" fill="#593529" stroke="#593529" stroke-width=".4" stroke-linejoin="round"/><path d="M133.8 72.3 L127.8 70.5 L121.0 69.4 L110.7 69.2 L102.4 70.0 L102.0 72.7 L110.7 72.0 L121.0 71.7 L127.8 72.0 Z" fill="#593529" stroke="#593529" stroke-width=".4" stroke-linejoin="round"/><path d="M53.1 82.8 C53.0 81.5 55.7 80.3 57.8 79.6 C59.9 78.9 63.1 78.3 65.5 78.5 C67.9 78.6 70.3 79.3 72.3 80.5 C74.3 81.6 77.6 84.1 77.4 85.3 C77.3 86.6 73.5 87.3 71.5 87.9 C69.5 88.5 67.6 88.8 65.5 88.7 C63.4 88.6 60.7 88.3 58.7 87.3 C56.6 86.3 53.3 84.0 53.1 82.8 Z" fill="#fff" stroke="#b98a6a" stroke-width=".5"/><path d="M128.2 82.8 C128.3 81.5 125.5 80.3 123.6 79.6 C121.6 78.9 118.6 78.3 116.3 78.5 C113.9 78.6 111.5 79.2 109.5 80.5 C107.5 81.7 104.2 84.6 104.3 85.8 C104.5 87.1 108.3 87.4 110.3 87.9 C112.3 88.4 114.2 88.8 116.3 88.7 C118.4 88.6 121.1 88.3 123.1 87.3 C125.1 86.3 128.2 84.0 128.2 82.8 Z" fill="#fff" stroke="#b98a6a" stroke-width=".5"/><circle cx="65.1" cy="83.9" r="5.4" fill="#7d6749"/><circle cx="65.1" cy="83.9" r="3.5" fill="#937d59"/><circle cx="65.1" cy="83.9" r="1.8" fill="#1c1a18"/><circle cx="66.1" cy="82.9" r=".7" fill="#fff"/><circle cx="116.3" cy="83.9" r="5.4" fill="#7d6749"/><circle cx="116.3" cy="83.9" r="3.5" fill="#937d59"/><circle cx="116.3" cy="83.9" r="1.8" fill="#1c1a18"/><circle cx="117.3" cy="82.9" r=".7" fill="#fff"/><path d="M53.1 82.8 C53.9 82.2 55.7 80.3 57.8 79.6 C59.9 78.9 63.1 78.2 65.5 78.3 C67.9 78.4 70.3 79.1 72.3 80.3 C74.3 81.4 76.6 84.3 77.4 85.2" fill="none" stroke="#6b4534" stroke-width=".9"/><path d="M128.2 82.8 C127.5 82.2 125.5 80.3 123.6 79.6 C121.6 78.9 118.6 78.2 116.3 78.3 C113.9 78.4 111.5 79.1 109.5 80.3 C107.5 81.5 105.2 84.8 104.3 85.7" fill="none" stroke="#6b4534" stroke-width=".9"/><path d="M47.6 75.9 C49.0 74.9 51.8 74.6 54.4 74.2 C57.0 73.8 60.1 73.5 62.9 73.4 C65.8 73.3 68.8 73.4 71.5 73.6 C74.2 73.9 77.1 74.0 79.2 74.7 C81.3 75.5 83.4 76.6 84.1 78.2 C84.8 79.7 84.1 82.3 83.6 84.3 C83.1 86.2 82.2 88.2 80.9 89.8 C79.6 91.5 77.7 93.1 75.7 94.1 C73.7 95.1 71.3 95.6 68.9 96.0 C66.5 96.4 63.6 96.3 61.2 96.3 C58.8 96.2 56.3 96.5 54.4 95.7 C52.5 95.0 50.9 93.5 49.7 92.0 C48.5 90.5 47.8 88.8 47.1 86.9 C46.5 84.9 45.8 82.3 45.9 80.5 C45.9 78.6 46.1 77.0 47.6 75.9 Z" fill="#fff" fill-opacity=".22" stroke="#4e5259" stroke-width=".9"/><path d="M134.7 75.9 C133.2 74.9 130.4 74.6 127.8 74.2 C125.3 73.8 122.1 73.5 119.3 73.4 C116.4 73.3 113.5 73.4 110.7 73.6 C108.0 73.9 105.2 74.0 103.1 74.7 C101.0 75.5 98.9 76.6 98.1 78.2 C97.4 79.7 98.1 82.3 98.6 84.3 C99.2 86.2 100.0 88.2 101.4 89.8 C102.7 91.5 104.5 93.1 106.5 94.1 C108.5 95.1 110.9 95.6 113.3 96.0 C115.7 96.4 118.6 96.3 121.0 96.3 C123.4 96.2 125.9 96.5 127.8 95.7 C129.7 95.0 131.3 93.5 132.5 92.0 C133.7 90.5 134.4 88.8 135.1 86.9 C135.7 84.9 136.4 82.3 136.4 80.5 C136.3 78.6 136.1 77.0 134.7 75.9 Z" fill="#fff" fill-opacity=".22" stroke="#4e5259" stroke-width=".9"/><path d="M84.2 79.2 L98 79.2 M41.8 79.6 L46 80 M136.2 80 L140.4 79.6" stroke="#4e5259" stroke-width="1" fill="none"/><path d="M88.4 122.2 L86.0 121.9 L79.0 124.4 L72.6 127.6 L70.2 130.5 L69.7 135.0 L69.7 151.0 L71.5 156.0 L74.8 160.4 L79.5 164.6 L85.0 168.0 L91.2 169.8 L97.4 168.0 L102.9 164.6 L107.6 160.4 L110.9 156.0 L112.7 151.0 L112.7 135.0 L112.2 130.5 L109.8 127.6 L103.4 124.4 L96.4 121.9 L94.0 122.2 Z M88.8 126.2 L82.0 128.2 L76.0 130.8 L74.0 133.0 L73.6 136.0 L73.4 148.5 L74.5 151.0 L79.4 153.2 L82.5 151.0 L91.2 142.8 L99.9 151.0 L103.0 153.2 L107.9 151.0 L109.0 148.5 L108.8 136.0 L108.4 133.0 L106.4 130.8 L100.4 128.2 L93.6 126.2 Z" fill="#5c3629" fill-rule="evenodd" stroke="#5c3629" stroke-width=".5" stroke-linejoin="round"/><path d="M88.9 121 L93.5 121 L93.3 127.5 L89.1 127.5Z" fill="#ecbd96"/><path d="M74.5 131.7 C74.9 131.2 79.4 132.6 82.2 132.7 C85.0 132.9 88.2 132.5 91.2 132.5 C94.1 132.5 97.5 132.9 100.1 132.7 C102.7 132.6 106.3 131.2 106.8 131.7 C107.2 132.2 105.3 134.5 102.7 135.6 C100.1 136.6 95.0 138.1 91.2 138.1 C87.3 138.1 82.4 136.6 79.6 135.6 C76.9 134.5 74.1 132.2 74.5 131.7 Z" fill="#e0a999"/><path d="M74.5 131.7 C74.5 131.3 79.8 131.2 82.2 131.2 C84.5 131.2 87.1 131.5 88.6 131.7 C90.1 131.9 90.3 132.2 91.2 132.2 C92.0 132.2 92.2 131.9 93.7 131.7 C95.2 131.5 97.9 131.2 100.1 131.2 C102.3 131.2 106.8 131.3 106.8 131.7 C106.8 132.1 102.7 133.1 100.1 133.5 C97.5 133.9 94.1 134.0 91.2 134.0 C88.2 134.0 85.0 133.9 82.2 133.5 C79.4 133.1 74.5 132.1 74.5 131.7 Z" fill="#d39a8a"/><path d="M74.8 131.8 C76.0 132.1 79.5 133.0 82.2 133.4 C84.9 133.7 88.2 133.9 91.2 133.9 C94.1 133.9 97.6 133.7 100.1 133.4 C102.7 133.0 105.5 132.1 106.5 131.8" fill="none" stroke="#bd8270" stroke-width=".7"/><clipPath id="avhc"><path d="M36.9 94.9 L33.7 84.9 L29.9 74.9 L25.8 62.6 L20.3 51.1 L24.3 50.3 L21.7 43.8 L18.8 36.2 L24.3 30.0 L23.2 23.3 L28.1 18.6 L30.5 9.8 L35.2 3.3 L41.6 -0.2 L83.9 -0.5 L127.3 -0.2 L132.6 2.7 L138.5 6.8 L143.8 12.1 L146.7 17.4 L148.5 26.2 L147.9 31.5 L151.4 36.2 L154.3 42.6 L155.7 52.0 L155.5 61.4 L153.7 73.2 L150.8 83.7 L142.6 95.5 L141.4 84.9 L140.2 67.3 L138.9 55.8 L138.1 43.8 L135.5 38.7 L129.5 36.1 L116.7 35.7 L103.9 32.7 L91.1 27.6 L80.0 24.2 L69.8 23.2 L59.5 24.6 L51.0 28.4 L45.9 32.7 L44.2 38.7 L43.4 56.7 L43.1 73.2 L41.6 83.7 Z"/></clipPath><path d="M36.9 94.9 L33.7 84.9 L29.9 74.9 L25.8 62.6 L20.3 51.1 L24.3 50.3 L21.7 43.8 L18.8 36.2 L24.3 30.0 L23.2 23.3 L28.1 18.6 L30.5 9.8 L35.2 3.3 L41.6 -0.2 L83.9 -0.5 L127.3 -0.2 L132.6 2.7 L138.5 6.8 L143.8 12.1 L146.7 17.4 L148.5 26.2 L147.9 31.5 L151.4 36.2 L154.3 42.6 L155.7 52.0 L155.5 61.4 L153.7 73.2 L150.8 83.7 L142.6 95.5 L141.4 84.9 L140.2 67.3 L138.9 55.8 L138.1 43.8 L135.5 38.7 L129.5 36.1 L116.7 35.7 L103.9 32.7 L91.1 27.6 L80.0 24.2 L69.8 23.2 L59.5 24.6 L51.0 28.4 L45.9 32.7 L44.2 38.7 L43.4 56.7 L43.1 73.2 L41.6 83.7 Z" fill="url(#avhr)"/><g clip-path="url(#avhc)"><path d="M35.6 6.2 L54.4 3.7 L74.9 10.5 L85.1 18.2 L69.8 13.1 L51.0 10.5 Z" fill="#76584c" opacity=".55"/><path d="M64.6 2.0 L83.4 2.8 L105.6 13.1 L116.7 20.8 L98.8 15.6 L80.0 8.0 Z" fill="#76584c" opacity=".55"/><path d="M95.4 2.8 L110.7 3.7 L131.2 15.6 L138.1 24.2 L123.6 18.2 L108.2 9.7 Z" fill="#76584c" opacity=".55"/><path d="M30.5 24.2 L38.2 17.3 L45.9 18.2 L39.0 30.2 L33.9 43.8 L28.8 47.2 Z" fill="#76584c" opacity=".55"/><path d="M143.2 31.9 L150.0 40.4 L152.6 55.8 L148.3 69.4 L146.6 51.5 Z" fill="#76584c" opacity=".55"/><path d="M80.0 13.1 L95.4 19.1 L116.7 28.4 L136.4 32.7 L143.2 40.4 L121.0 33.6 L99.6 28.4 L83.4 20.8 Z" fill="#52342a" opacity=".55"/><path d="M47.6 21.6 L57.8 17.3 L69.8 16.5 L57.8 22.5 L46.7 31.9 Z" fill="#52342a" opacity=".55"/><path d="M25.4 31.9 L32.2 35.3 L35.6 50.6 L31.3 60.9 L27.1 47.2 Z" fill="#52342a" opacity=".55"/><path d="M138.1 43.8 L143.2 48.9 L144.9 64.3 L141.5 77.1 L139.8 60.0 Z" fill="#52342a" opacity=".55"/></g></svg></div></div>
  <div id="ribbon">
    <svg class="abs" style="left:0;top:0" width="124" height="28" viewBox="0 0 124 28"><polygon points="0,0 124,0 117,14 124,28 110,28 110,24 14,24 14,28 0,28 7,14" fill="#3a87ad"/></svg>
    <span class="abs" style="left:17px;top:4px"><svg class="i " viewBox="0 0 1536 1792" width="12.00" height="14.00" style="fill:#b0d877;"><path d="M1536 896C1536 472 1192 128 768 128C344 128 0 472 0 896C0 1320 344 1664 768 1664C1192 1664 1536 1320 1536 896Z"/></svg></span>
    <span class="tx"><span class="mm" style="margin-right:-11.21px">qiuma.cc</span></span>
  </div>
  <div id="contact">
    <div class="lb lb1"><span class="abs" style="left:7px;top:1px"><svg class="i " viewBox="0 0 1536 1792" width="11.14" height="13.00" style="fill:#fff;"><path d="M768 128C344 128 0 472 0 896C0 1320 344 1664 768 1664C1192 1664 1536 1320 1536 896C1536 472 1192 128 768 128ZM1042 649C1053 642 1071 633 1085 637C1096 640 1105 644 1092 653C1086 657 1077 653 1070 655C1079 657 1092 661 1088 670C1114 685 1080 703 1063 701C1071 702 1046 717 1046 716C1037 721 1025 721 1018 730C1010 741 1021 760 1006 756C1000 769 977 762 967 776C978 788 956 805 945 790C935 794 940 805 930 811C934 817 935 823 928 827C930 826 942 836 945 837C943 842 939 846 934 846C939 859 928 873 919 881C909 889 886 897 883 899C865 916 853 941 885 948C886 948 886 981 887 982C889 994 894 1029 873 1016C863 1011 857 983 854 972C851 960 850 960 842 948C829 963 827 952 816 945C805 939 789 941 783 935C768 946 757 943 754 926C750 934 758 946 757 949C752 959 743 957 735 951C722 941 694 958 679 951C680 951 684 955 687 957C684 969 677 962 671 966C664 971 658 981 652 986C665 1011 651 1035 652 1062C652 1082 665 1117 684 1128C693 1133 723 1135 732 1131C746 1125 744 1114 749 1102C754 1089 760 1083 775 1082C818 1080 785 1115 780 1133C777 1146 776 1161 774 1173C779 1175 784 1174 789 1174C789 1170 792 1165 792 1162C798 1172 818 1175 824 1163C831 1175 845 1184 847 1198C849 1212 862 1227 843 1227C829 1227 845 1255 847 1260C858 1280 876 1288 896 1278C896 1286 893 1308 882 1310C872 1312 853 1291 857 1280C856 1284 853 1287 850 1289C840 1277 823 1271 814 1259C812 1256 785 1215 791 1213C777 1219 749 1209 736 1202C715 1191 712 1162 686 1166C668 1169 663 1176 642 1168C628 1163 616 1153 602 1146C586 1137 558 1128 552 1108C546 1092 548 1073 539 1058C533 1048 515 1028 502 1028C514 1028 491 998 488 995C477 982 437 947 445 927C447 924 425 916 421 915C425 925 426 936 431 945C436 955 442 964 448 974C459 992 474 1014 472 1036C459 1040 463 1021 459 1013C452 1000 433 1000 428 986C430 985 431 985 433 984C434 967 409 953 413 941C399 930 399 909 389 895C380 882 365 876 352 867C347 864 311 818 324 815C304 820 294 773 297 761C297 761 295 761 295 760C299 748 292 686 308 685C297 686 294 659 297 654C299 650 314 665 315 667C321 664 327 656 325 649C322 641 311 634 304 628C301 626 261 600 260 601C264 594 263 587 257 582C238 597 248 568 238 565C234 564 230 561 226 557C284 465 365 388 461 335C467 334 475 334 483 334C501 336 511 351 524 360C526 355 522 347 519 342C522 334 534 332 541 330C550 329 563 327 571 331C565 322 558 314 551 306C550 307 547 309 546 311C535 302 514 314 504 318C496 322 489 327 481 330C476 332 473 332 469 331C499 315 530 301 563 290C569 294 575 301 584 308C578 303 578 326 580 330C591 345 615 335 630 335C629 335 674 341 665 330C672 340 672 355 681 364C690 355 677 345 683 336C685 332 703 327 709 324C716 319 704 312 701 310C691 304 652 301 671 278C678 270 703 274 711 279C722 285 734 296 719 306C726 307 759 316 754 329C757 323 762 314 770 314C779 315 781 336 785 341C799 366 823 316 827 318C809 311 843 302 852 305C859 308 870 332 857 331C868 341 869 363 849 362C835 361 819 342 806 357C797 367 793 382 784 391C770 405 751 404 734 402C741 403 719 426 717 430C711 437 707 445 705 453C703 463 705 474 700 484C717 479 726 510 719 511C740 508 757 508 777 515C791 520 812 526 818 541C822 535 841 538 847 540C859 546 860 559 863 570C867 585 880 610 897 602C900 600 922 590 914 584C906 577 897 559 905 549C913 538 932 535 937 521C945 498 913 501 913 484C913 474 926 471 925 459C925 449 910 429 922 422C932 416 980 426 989 432C998 438 1026 446 1028 455C1026 455 1025 455 1023 455C1031 462 1038 477 1024 481C1033 479 1059 489 1041 495C1047 492 1052 494 1058 490C1065 486 1069 479 1078 484C1080 485 1091 463 1097 464C1106 465 1108 478 1112 484C1116 493 1127 496 1131 505C1138 522 1135 538 1158 544C1165 546 1184 535 1183 550C1187 546 1189 543 1189 542C1190 556 1196 572 1213 570C1213 570 1213 589 1211 592C1205 601 1190 599 1181 604C1178 605 1154 626 1157 629C1144 614 1123 614 1106 618C1088 621 1071 623 1054 630C1046 634 1038 638 1032 645C1029 649 1024 667 1019 668C1029 666 1034 655 1042 649ZM879 1526C878 1521 877 1511 877 1510C876 1494 893 1483 892 1468C881 1465 878 1454 880 1442C882 1425 897 1413 909 1402C921 1391 924 1368 921 1354C916 1330 916 1305 912 1281C913 1287 930 1285 933 1293C937 1286 939 1277 944 1270C948 1264 955 1262 961 1257C971 1251 992 1228 1004 1242C1014 1254 989 1267 1002 1278C1006 1270 1002 1258 1010 1250C1026 1232 1037 1252 1053 1257C1070 1262 1076 1268 1089 1279C1085 1275 1105 1268 1107 1267C1126 1263 1134 1274 1147 1284C1161 1294 1183 1301 1181 1321C1191 1323 1197 1326 1205 1329C1213 1333 1224 1331 1230 1337C1138 1434 1016 1502 879 1526Z"/></svg></span><span class="tx" style="left:20px;top:-1.5px">最后登录IP：<span style="letter-spacing:.18px">223.242.0.185</span></span></div>
    <div class="lb lb2"><span class="abs" style="left:7px;top:2px"><svg class="i " viewBox="0 0 1024 1792" width="7.43" height="13.00" style="fill:#fff;"><path d="M768 640C768 781 653 896 512 896C371 896 256 781 256 640C256 499 371 384 512 384C653 384 768 499 768 640ZM1024 640C1024 357 795 128 512 128C229 128 0 357 0 640C0 701 7 764 33 819L398 1593C418 1637 464 1664 512 1664C560 1664 606 1637 627 1593L991 819C1017 764 1024 701 1024 640Z"/></svg></span><span class="tx" style="left:20px;top:-.6px">最后登录地址：安徽省安庆市</span></div>
    <div class="lb lb3"><svg class="abs" style="left:6.5px;top:2px" width="14" height="14" viewBox="0 0 14 14"><circle cx="7" cy="7" r="5.6" fill="none" stroke="#fff" stroke-width="2.3"/><path d="M7 3.2V7.6H10.4" fill="none" stroke="#fff" stroke-width="1.8"/></svg><span class="tx" style="left:31px;top:1.4px">最后登录时间：<span style="letter-spacing:.85px">2021-06-18</span><span style="display:inline-block;width:12px"></span><span style="letter-spacing:.33px">10:02:35</span></span></div>
  </div>
  <div class="g2" style="left:24px"><span class="ck" style="top:-1.5px;left:1px"><svg class="i " viewBox="0 0 1792 1792" width="29.00" height="29.00" style="fill:#69aa46;"><path d="M1671 566C1671 541 1661 516 1643 498L1507 362C1489 344 1464 334 1439 334C1414 334 1389 344 1371 362L715 1019L421 724C403 706 378 696 353 696C328 696 303 706 285 724L149 860C131 878 121 903 121 928C121 953 131 978 149 996L511 1358L647 1494C665 1512 690 1522 715 1522C740 1522 765 1512 783 1494L919 1358L1643 634C1661 616 1671 591 1671 566Z"/></svg></span><span class="tx">已认证</span></div>
  <div id="vsep"></div>
  <div class="g2" style="left:225px"><span class="ck" style="top:-1.5px;left:1px"><svg class="i " viewBox="0 0 1792 1792" width="29.00" height="29.00" style="fill:#69aa46;"><path d="M1671 566C1671 541 1661 516 1643 498L1507 362C1489 344 1464 334 1439 334C1414 334 1389 344 1371 362L715 1019L421 724C403 706 378 696 353 696C328 696 303 706 285 724L149 860C131 878 121 903 121 928C121 953 131 978 149 996L511 1358L647 1494C665 1512 690 1522 715 1522C740 1522 765 1512 783 1494L919 1358L1643 634C1661 616 1671 591 1671 566Z"/></svg></span><span class="tx">用户状态</span></div>

  <div class="rowlab" style="top:94px">今日情况</div>
  <div class="sb purple" style="left:516px;top:80px;width:58px"><div class="n"><span class="md" style="margin-right:-1.17px">1</span></div><div class="l">总订单</div></div>
  <div class="sb green" style="left:586px;top:80px;width:82px"><div class="n"><span class="md" style="margin-right:-1.17px">0</span></div><div class="l">已支付订单</div></div>
  <div class="sb red" style="left:680px;top:80px;width:82px"><div class="n"><span class="md" style="margin-right:-1.17px">1</span></div><div class="l">未支付订单</div></div>
  <div class="sb green" style="left:774px;top:80px;width:53px"><div class="n">￥<span class="md" style="margin-right:-1.17px">0</span></div><div class="l">收入</div></div>
  <div class="sb green" style="left:839px;top:80px;width:70px"><div class="n">￥<span class="md" style="margin-right:-1.17px">0</span></div><div class="l">实付金额</div></div>
  <div class="rowlab" style="top:171px">账户资金</div>
  <div class="sb pink" style="left:516px;top:157px;width:104px"><div class="n">￥<span class="md" style="margin-right:-1.17px">0</span><span class="mm" style="margin-right:-2.08px">.</span><span class="md" style="margin-right:-4.67px">0000</span></div><div class="l">账户余额</div></div>
  <div class="sb pink" style="left:632px;top:157px;width:103px"><div class="n">￥<span class="md" style="margin-right:-1.17px">0</span><span class="mm" style="margin-right:-2.08px">.</span><span class="md" style="margin-right:-4.67px">0000</span></div><div class="l">冻结金额</div></div>
  <div class="sb pink" style="left:747px;top:157px;width:82px"><div class="n">￥<span class="md" style="margin-right:-1.17px">0</span></div><div class="l">投诉保证金</div></div>

  <div id="info">
    <div class="r"><div class="k">用户名</div><div class="v"><span class="mm" style="margin-right:-11.21px">qiuma.cc</span></div></div>
    <div class="r"><div class="k">账户类型</div><div class="v">普通商户</div></div>
    <div class="r"><div class="k">商户号</div><div class="v"><span class="md" style="margin-right:-7.07px">180762223</span></div></div>
    <div class="r"><div class="k">手机号</div><div class="v"><span class="md" style="margin-right:-8.65px">17852252346</span></div></div>
    <div class="r"><div class="k"><span class="mm" style="margin-right:-2.80px">QQ</span></div><div class="v"></div></div>
    <div class="r"><div class="k">网关地址</div><div class="v"><span class="mm" style="margin-right:-5.61px">http</span><span class="mm" style="margin-right:-4.20px">://</span><span class="md" style="margin-right:-2.36px">854</span><span class="mm" style="margin-right:-33.63px">.rglxc.top/paididx/index</span></div></div>
    <div class="r"><div class="k" style="padding-top:8px">对接文档</div><div class="v"><span id="dl"><span class="abs" style="left:5px;top:3px"><svg class="i " viewBox="0 0 1664 1792" width="11.14" height="12.00" style="fill:#fff;"><path d="M1280 1344C1280 1379 1251 1408 1216 1408C1181 1408 1152 1379 1152 1344C1152 1309 1181 1280 1216 1280C1251 1280 1280 1309 1280 1344ZM1536 1344C1536 1379 1507 1408 1472 1408C1437 1408 1408 1379 1408 1344C1408 1309 1437 1280 1472 1280C1507 1280 1536 1309 1536 1344ZM1664 1120C1664 1067 1621 1024 1568 1024H1104L968 1160C931 1196 883 1216 832 1216C781 1216 733 1196 696 1160L561 1024H96C43 1024 0 1067 0 1120V1440C0 1493 43 1536 96 1536H1568C1621 1536 1664 1493 1664 1440ZM1339 551C1329 528 1306 512 1280 512H1024V64C1024 29 995 0 960 0H704C669 0 640 29 640 64V512H384C358 512 335 528 325 551C315 575 320 603 339 621L787 1069C799 1082 816 1088 832 1088C848 1088 865 1082 877 1069L1325 621C1344 603 1349 575 1339 551Z"/></svg></span><span class="abs" style="left:23px;top:0">点击下载</span></span></div></div>
  </div>

  <div id="whd"><span class="abs" style="left:0;top:4px"><svg class="i " viewBox="0 0 1408 1792" width="13.36" height="17.00" style="fill:#ff892a;"><path d="M384 1344C384 1238 298 1152 192 1152C86 1152 0 1238 0 1344C0 1450 86 1536 192 1536C298 1536 384 1450 384 1344ZM896 1467C879 1254 786 1053 634 902C483 750 282 657 69 640C67 640 66 640 64 640C48 640 32 646 21 657C7 669 0 686 0 704V839C0 872 25 899 58 902C363 931 605 1173 634 1478C637 1511 664 1536 697 1536H832C850 1536 867 1529 879 1515C891 1502 897 1485 896 1467ZM1408 1469C1390 1119 1243 790 994 542C746 293 417 146 67 128C66 128 65 128 64 128C48 128 32 134 20 146C7 158 0 174 0 192V335C0 368 26 396 60 398C641 432 1104 895 1137 1476C1139 1510 1167 1536 1201 1536H1344C1362 1536 1378 1529 1390 1516C1403 1503 1409 1486 1408 1469Z"/></svg></span><span class="tt">系统公告</span></div>
  <div id="feed">
    <div class="act"><div class="ti">客户告知书</div><div class="tm"><span class="abs" style="left:0;top:3px"><svg class="i " viewBox="0 0 1536 1792" width="12.26" height="14.30" style="fill:#555;"><path d="M896 544C896 526 882 512 864 512H800C782 512 768 526 768 544V896H544C526 896 512 910 512 928V992C512 1010 526 1024 544 1024H864C882 1024 896 1010 896 992ZM1312 896C1312 1196 1068 1440 768 1440C468 1440 224 1196 224 896C224 596 468 352 768 352C1068 352 1312 596 1312 896ZM1536 896C1536 472 1192 128 768 128C344 128 0 472 0 896C0 1320 344 1664 768 1664C1192 1664 1536 1320 1536 896Z"/></svg></span><span class="d"><span class="md" style="margin-right:-3.14px">2018</span><span class="mm" style="margin-right:-1.40px">-</span><span class="md" style="margin-right:-1.57px">01</span><span class="mm" style="margin-right:-1.40px">-</span><span class="md" style="margin-right:-1.57px">12</span></span></div></div>
    <div class="act"><div class="ti">支付宝被列入<span class="q">“</span>经营异常名录<span class="q">”</span>！&ensp;从此，支付宝被刻上<span class="q">“</span>不良记录<span class="q">”</span>烙印</div><div class="tm"><span class="abs" style="left:0;top:3px"><svg class="i " viewBox="0 0 1536 1792" width="12.26" height="14.30" style="fill:#555;"><path d="M896 544C896 526 882 512 864 512H800C782 512 768 526 768 544V896H544C526 896 512 910 512 928V992C512 1010 526 1024 544 1024H864C882 1024 896 1010 896 992ZM1312 896C1312 1196 1068 1440 768 1440C468 1440 224 1196 224 896C224 596 468 352 768 352C1068 352 1312 596 1312 896ZM1536 896C1536 472 1192 128 768 128C344 128 0 472 0 896C0 1320 344 1664 768 1664C1192 1664 1536 1320 1536 896Z"/></svg></span><span class="d"><span class="md" style="margin-right:-3.14px">2017</span><span class="mm" style="margin-right:-1.40px">-</span><span class="md" style="margin-right:-1.57px">08</span><span class="mm" style="margin-right:-1.40px">-</span><span class="md" style="margin-right:-1.57px">27</span></span></div></div>
    <div class="act"><div class="ti">银联<span class="mm" style="margin-right:-11.21px">ChinaPay</span>、巾帼三六五、乐易三家支付机构被上海人行处罚</div><div class="tm"><span class="abs" style="left:0;top:3px"><svg class="i " viewBox="0 0 1536 1792" width="12.26" height="14.30" style="fill:#555;"><path d="M896 544C896 526 882 512 864 512H800C782 512 768 526 768 544V896H544C526 896 512 910 512 928V992C512 1010 526 1024 544 1024H864C882 1024 896 1010 896 992ZM1312 896C1312 1196 1068 1440 768 1440C468 1440 224 1196 224 896C224 596 468 352 768 352C1068 352 1312 596 1312 896ZM1536 896C1536 472 1192 128 768 128C344 128 0 472 0 896C0 1320 344 1664 768 1664C1192 1664 1536 1320 1536 896Z"/></svg></span><span class="d"><span class="md" style="margin-right:-3.14px">2017</span><span class="mm" style="margin-right:-1.40px">-</span><span class="md" style="margin-right:-1.57px">08</span><span class="mm" style="margin-right:-1.40px">-</span><span class="md" style="margin-right:-1.57px">27</span></span></div></div>
    <div class="act"><div class="ti">爆料：<span class="md" style="margin-right:-1.57px">12</span>家支付机构吃了工商税务的罚单&ensp;最高被罚<span class="md" style="margin-right:-0.79px">8</span>万元</div><div class="tm"><span class="abs" style="left:0;top:3px"><svg class="i " viewBox="0 0 1536 1792" width="12.26" height="14.30" style="fill:#555;"><path d="M896 544C896 526 882 512 864 512H800C782 512 768 526 768 544V896H544C526 896 512 910 512 928V992C512 1010 526 1024 544 1024H864C882 1024 896 1010 896 992ZM1312 896C1312 1196 1068 1440 768 1440C468 1440 224 1196 224 896C224 596 468 352 768 352C1068 352 1312 596 1312 896ZM1536 896C1536 472 1192 128 768 128C344 128 0 472 0 896C0 1320 344 1664 768 1664C1192 1664 1536 1320 1536 896Z"/></svg></span><span class="d"><span class="md" style="margin-right:-3.14px">2017</span><span class="mm" style="margin-right:-1.40px">-</span><span class="md" style="margin-right:-1.57px">08</span><span class="mm" style="margin-right:-1.40px">-</span><span class="md" style="margin-right:-1.57px">27</span></span></div></div>
    <div class="act"><div class="ti">华尔街上再掀投资热潮，支付与金融科技比翼双飞</div><div class="tm"><span class="abs" style="left:0;top:3px"><svg class="i " viewBox="0 0 1536 1792" width="12.26" height="14.30" style="fill:#555;"><path d="M896 544C896 526 882 512 864 512H800C782 512 768 526 768 544V896H544C526 896 512 910 512 928V992C512 1010 526 1024 544 1024H864C882 1024 896 1010 896 992ZM1312 896C1312 1196 1068 1440 768 1440C468 1440 224 1196 224 896C224 596 468 352 768 352C1068 352 1312 596 1312 896ZM1536 896C1536 472 1192 128 768 128C344 128 0 472 0 896C0 1320 344 1664 768 1664C1192 1664 1536 1320 1536 896Z"/></svg></span><span class="d"><span class="md" style="margin-right:-3.14px">2017</span><span class="mm" style="margin-right:-1.40px">-</span><span class="md" style="margin-right:-1.57px">08</span><span class="mm" style="margin-right:-1.40px">-</span><span class="md" style="margin-right:-1.57px">27</span></span></div></div>
  </div>
</div>
<div id="footer"><b>聚合支付</b><span class="cp">©</span>聚合支付</div>

</body>
</html>
